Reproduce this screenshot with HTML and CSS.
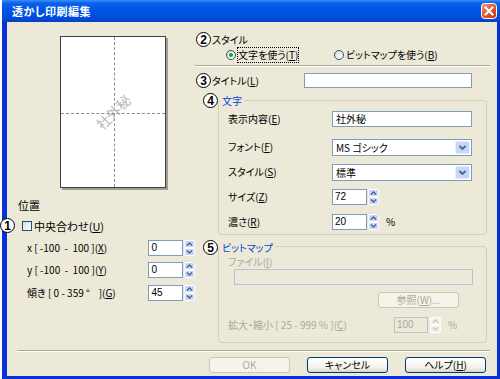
FILE: index.html
```html
<!DOCTYPE html>
<html lang="ja">
<head>
    <meta charset="UTF-8">
    <title>透かし印刷編集</title>
    <link rel="stylesheet" href="styles.css">
</head>
<body>
    <div class="window">
        <div class="titlebar">
            <span class="title">透かし印刷編集</span>
            <svg class="close-btn" width="16" height="16" viewBox="0 0 16 16">
                <defs>
                    <linearGradient id="closeGrad" x1="0" y1="0" x2="1" y2="1">
                        <stop offset="0" stop-color="#f09a7c"/>
                        <stop offset="0.5" stop-color="#e05a34"/>
                        <stop offset="1" stop-color="#c23a14"/>
                    </linearGradient>
                </defs>
                <rect x="0.5" y="0.5" width="15" height="15" rx="3" fill="url(#closeGrad)" stroke="#fff"/>
                <path d="M4.5 4.5 L11.5 11.5 M11.5 4.5 L4.5 11.5" stroke="#fff" stroke-width="2" stroke-linecap="square"/>
            </svg>
        </div>

        <div class="client">
            <div class="main">
                <!-- left: preview and position -->
                <div class="left-col">
                    <div class="preview">
                        <span class="watermark">社外秘</span>
                    </div>
                    <div class="pos-label">位置</div>
                    <div class="check-row">
                        <span class="num">1</span>
                        <span class="checkbox"></span>
                        <span class="check-text">中央合わせ(<u>U</u>)</span>
                    </div>
                    <div class="spin-row first">
                        <span class="spin-label">x [ -100&nbsp;&nbsp;-&nbsp;&nbsp;100 ](<u>X</u>)</span>
                        <span class="num-input">0</span>
                        <svg class="spinner" width="11" height="16" viewBox="0 0 11 16"><rect x="0.5" y="0.5" width="10" height="7" rx="1.5" fill="#c6d6fb" stroke="#fff"/><rect x="0.5" y="8.5" width="10" height="7" rx="1.5" fill="#c6d6fb" stroke="#fff"/><path d="M3 5.5 L5.5 3 L8 5.5 M3 10.5 L5.5 13 L8 10.5" fill="none" stroke="#4d6185" stroke-width="1.4"/></svg>
                    </div>
                    <div class="spin-row second">
                        <span class="spin-label">y [ -100&nbsp;&nbsp;-&nbsp;&nbsp;100 ](<u>Y</u>)</span>
                        <span class="num-input">0</span>
                        <svg class="spinner" width="11" height="16" viewBox="0 0 11 16"><rect x="0.5" y="0.5" width="10" height="7" rx="1.5" fill="#c6d6fb" stroke="#fff"/><rect x="0.5" y="8.5" width="10" height="7" rx="1.5" fill="#c6d6fb" stroke="#fff"/><path d="M3 5.5 L5.5 3 L8 5.5 M3 10.5 L5.5 13 L8 10.5" fill="none" stroke="#4d6185" stroke-width="1.4"/></svg>
                    </div>
                    <div class="spin-row third">
                        <span class="spin-label">傾き [ 0 - 359 °&nbsp;&nbsp;&nbsp;&nbsp;](<u>G</u>)</span>
                        <span class="num-input">45</span>
                        <svg class="spinner" width="11" height="16" viewBox="0 0 11 16"><rect x="0.5" y="0.5" width="10" height="7" rx="1.5" fill="#c6d6fb" stroke="#fff"/><rect x="0.5" y="8.5" width="10" height="7" rx="1.5" fill="#c6d6fb" stroke="#fff"/><path d="M3 5.5 L5.5 3 L8 5.5 M3 10.5 L5.5 13 L8 10.5" fill="none" stroke="#4d6185" stroke-width="1.4"/></svg>
                    </div>
                </div>

                <!-- right: style, title, text, bitmap -->
                <div class="right-col">
                    <div class="head-row style-head">
                        <span class="num">2</span>
                        <span class="head-label">スタイル</span>
                    </div>
                    <div class="radio-row">
                        <span class="radio-item first">
                            <span class="radio checked"></span>
                            <span class="radio-text focused">文字を使う(<u>T</u>)</span>
                        </span>
                        <span class="radio-item">
                            <span class="radio"></span>
                            <span class="radio-text">ビットマップを使う(<u>B</u>)</span>
                        </span>
                    </div>
                    <div class="sep"></div>
                    <div class="head-row title-head">
                        <span class="num">3</span>
                        <span class="head-label wide">タイトル(<u>L</u>)</span>
                        <span class="text-input title-input"></span>
                    </div>

                    <div class="group-head text-head">
                        <span class="num">4</span>
                        <span class="group-name">文字</span>
                    </div>
                    <div class="group-box text-box">
                        <div class="form-row">
                            <span class="form-label">表示内容(<u>E</u>)</span>
                            <span class="text-input wide-input">社外秘</span>
                        </div>
                        <div class="form-row gap-12">
                            <span class="form-label">フォント(<u>F</u>)</span>
                            <span class="select">MS ゴシック
                                <svg class="drop-btn" width="15" height="13" viewBox="0 0 15 13"><rect x="0.5" y="0.5" width="14" height="12" rx="1.5" fill="#c6d6fb" stroke="#e8eefc"/><path d="M4.5 5 L7.5 8 L10.5 5" fill="none" stroke="#4d6185" stroke-width="1.8"/></svg>
                            </span>
                        </div>
                        <div class="form-row gap-9">
                            <span class="form-label">スタイル(<u>S</u>)</span>
                            <span class="select">標準
                                <svg class="drop-btn" width="15" height="13" viewBox="0 0 15 13"><rect x="0.5" y="0.5" width="14" height="12" rx="1.5" fill="#c6d6fb" stroke="#e8eefc"/><path d="M4.5 5 L7.5 8 L10.5 5" fill="none" stroke="#4d6185" stroke-width="1.8"/></svg>
                            </span>
                        </div>
                        <div class="form-row gap-9">
                            <span class="form-label">サイズ(<u>Z</u>)</span>
                            <span class="num-input">72</span>
                            <svg class="spinner" width="11" height="16" viewBox="0 0 11 16"><rect x="0.5" y="0.5" width="10" height="7" rx="1.5" fill="#c6d6fb" stroke="#fff"/><rect x="0.5" y="8.5" width="10" height="7" rx="1.5" fill="#c6d6fb" stroke="#fff"/><path d="M3 5.5 L5.5 3 L8 5.5 M3 10.5 L5.5 13 L8 10.5" fill="none" stroke="#4d6185" stroke-width="1.4"/></svg>
                        </div>
                        <div class="form-row gap-9">
                            <span class="form-label">濃さ(<u>R</u>)</span>
                            <span class="num-input">20</span>
                            <svg class="spinner" width="11" height="16" viewBox="0 0 11 16"><rect x="0.5" y="0.5" width="10" height="7" rx="1.5" fill="#c6d6fb" stroke="#fff"/><rect x="0.5" y="8.5" width="10" height="7" rx="1.5" fill="#c6d6fb" stroke="#fff"/><path d="M3 5.5 L5.5 3 L8 5.5 M3 10.5 L5.5 13 L8 10.5" fill="none" stroke="#4d6185" stroke-width="1.4"/></svg>
                            <span class="unit">%</span>
                        </div>
                    </div>

                    <div class="group-head bitmap-head">
                        <span class="num">5</span>
                        <span class="group-name">ビットマップ</span>
                    </div>
                    <div class="group-box bitmap-box">
                        <div class="file-label">ファイル(<u>I</u>)</div>
                        <div class="text-input disabled file-input"></div>
                        <div class="btn disabled browse-btn">参照(<u>W</u>)...</div>
                        <div class="form-row scale-row">
                            <span class="form-label scale-label">拡大・縮小 [ 25 - 999 % ](<u>C</u>)</span>
                            <span class="num-input disabled">100</span>
                            <svg class="spinner" width="11" height="16" viewBox="0 0 11 16"><rect x="0.5" y="0.5" width="10" height="7" rx="1.5" fill="#f2f1ea" stroke="#fff"/><rect x="0.5" y="8.5" width="10" height="7" rx="1.5" fill="#f2f1ea" stroke="#fff"/><path d="M3 5.5 L5.5 3 L8 5.5 M3 10.5 L5.5 13 L8 10.5" fill="none" stroke="#c9c7ba" stroke-width="1.4"/></svg>
                            <span class="unit">%</span>
                        </div>
                    </div>
                </div>
            </div>

            <div class="footer-sep"></div>
            <div class="buttons">
                <div class="btn disabled">OK</div>
                <div class="btn">キャンセル</div>
                <div class="btn">ヘルプ(<u>H</u>)</div>
            </div>
        </div>
    </div>
</body>
</html>
```

FILE: styles.css
```css
* {
    box-sizing: border-box;
}

body {
    margin: 0;
    background: #fff;
    font-family: "Noto Sans CJK JP", sans-serif;
    font-size: 10px;
    line-height: 14px;
    color: #000;
    font-feature-settings: "palt";
}

u {
    text-decoration: underline;
}

.window {
    margin-left: 2px;
    width: 498px;
    height: 379px;
    background: #0831d9;
    display: flex;
    flex-direction: column;
}

.titlebar {
    height: 22px;
    display: flex;
    align-items: center;
    padding: 0 3px 0 10px;
    background: linear-gradient(#3d8ff8 0, #0a62ec 3px, #0155e6 45%, #0149da 85%, #0540c4 100%);
}

.title {
    color: #fff;
    font-weight: bold;
    font-size: 11px;
    letter-spacing: 0.5px;
}

.close-btn {
    margin-left: auto;
}

.client {
    margin: 0 3px 3px 5px;
    height: 354px;
    background: #ece9d8;
}

.main {
    display: flex;
    height: 321px;
}

/* left column */
.left-col {
    width: 188px;
}

.preview {
    position: relative;
    margin: 14px 0 0 53px;
    width: 106px;
    height: 152px;
    border: 1px solid #404040;
    background: #fff;
    box-shadow: 2px 2px 0 #a19f93;
}

.preview::before {
    content: "";
    position: absolute;
    left: 53px;
    top: 0;
    bottom: 0;
    border-left: 1px dashed #8c8c8c;
}

.preview::after {
    content: "";
    position: absolute;
    top: 76px;
    left: 0;
    right: 0;
    border-top: 1px dashed #8c8c8c;
}

.watermark {
    position: absolute;
    left: 50%;
    top: 50%;
    transform: translate(-50%, -50%) rotate(-45deg);
    color: #b8b8b8;
    font-size: 14px;
    white-space: nowrap;
}

.pos-label {
    margin: 10px 0 0 11px;
    font-size: 11px;
}

.num {
    width: 15px;
    height: 15px;
    flex: none;
    border: 1.5px solid #000;
    border-radius: 50%;
    background: #fff;
    display: flex;
    align-items: center;
    justify-content: center;
    font-family: "Liberation Sans", sans-serif;
    font-weight: bold;
    font-size: 12px;
    line-height: 1;
}

.check-row {
    display: flex;
    align-items: center;
    height: 15px;
    margin: 6px 0 0 -7px;
}

.checkbox {
    width: 10px;
    height: 10px;
    margin: 0 2px 0 7px;
    border: 1px solid #1c5180;
    background: linear-gradient(135deg, #dcdbd2, #fff);
}

.check-text {
    font-size: 11px;
}

.spin-row {
    display: flex;
    align-items: center;
    height: 16px;
    padding-left: 20px;
}

.spin-row.first {
    margin-top: 7px;
}

.spin-row.second {
    margin-top: 6px;
}

.spin-row.third {
    margin-top: 7px;
}

.spin-label {
    width: 123px;
    white-space: nowrap;
}

.num-input {
    width: 35px;
    height: 16px;
    padding-left: 2px;
    border: 1px solid #7f9db9;
    background: #fff;
    font-family: "Liberation Sans", sans-serif;
    font-size: 10px;
    line-height: 14px;
}

.num-input.disabled {
    width: 34px;
    border-color: #b5c4d3;
    background: #ece9d8;
    color: #aca899;
}

.spinner {
    margin-left: 1px;
    flex: none;
}

.unit {
    margin-left: 7px;
}

/* right column */
.right-col {
    flex: 1;
}

.head-row {
    display: flex;
    align-items: center;
    height: 15px;
    margin-left: 1px;
}

.style-head {
    margin-top: 10px;
}

.head-label {
    margin-left: 1px;
}

.head-label.wide {
    width: 92px;
}

.radio-row {
    display: flex;
    align-items: center;
    height: 14px;
    margin-top: 1px;
    padding-left: 31px;
}

.radio-item {
    display: flex;
    align-items: center;
}

.radio-item.first {
    width: 108px;
}

.radio {
    width: 10px;
    height: 10px;
    margin-right: 2px;
    border: 1px solid #1c5180;
    border-radius: 50%;
    background: linear-gradient(135deg, #dcdbd2, #fff);
    position: relative;
}

.radio.checked::after {
    content: "";
    position: absolute;
    left: 2px;
    top: 2px;
    width: 4px;
    height: 4px;
    border-radius: 50%;
    background: #21a121;
}

.radio-text.focused {
    outline: 1px dotted #000;
}

.sep {
    margin-top: 3px;
    width: 295px;
    border-top: 1px solid #aca899;
    border-bottom: 1px solid #fff;
}

.title-head {
    margin-top: 6px;
}

.text-input {
    height: 16px;
    padding-left: 3px;
    border: 1px solid #7f9db9;
    background: #fff;
    line-height: 14px;
}

.title-input {
    width: 168px;
    height: 15px;
}

.group-head {
    position: relative;
    z-index: 1;
    display: flex;
    align-items: center;
    height: 15px;
    margin-left: 8px;
}

.text-head {
    margin-top: 5px;
}

.bitmap-head {
    margin-top: 5px;
}

.group-name {
    margin-left: 2px;
    padding: 0 2px;
    background: #ece9d8;
    color: #0046d5;
}

.group-box {
    width: 269px;
    margin-left: 23px;
    border: 1px solid #d0d0bf;
    border-radius: 4px;
    padding-left: 9px;
}

.text-box {
    margin-top: -8px;
    height: 135px;
    padding-top: 10px;
}

.bitmap-box {
    margin-top: -9px;
    height: 97px;
    padding-top: 8px;
    color: #aca899;
}

.form-row {
    display: flex;
    align-items: center;
    height: 16px;
}

.form-row.gap-12 {
    margin-top: 12px;
}

.form-row.gap-9 {
    margin-top: 9px;
}

.form-label {
    width: 104px;
    white-space: nowrap;
}

.wide-input {
    width: 140px;
}

.select {
    position: relative;
    width: 140px;
    height: 17px;
    padding-left: 3px;
    border: 1px solid #7f9db9;
    background: #fff;
    line-height: 15px;
}

.drop-btn {
    position: absolute;
    right: 1px;
    top: 1px;
}

.file-label {
    height: 14px;
}

.file-input {
    width: 239px;
    margin-left: 6px;
    border-color: #b5c4d3;
    background: #ece9d8;
}

.browse-btn {
    width: 93px;
    height: 15px;
    margin: 7px 0 0 150px;
    line-height: 13px;
}

.scale-row {
    margin-top: 9px;
}

.scale-label {
    width: 166px;
}

.scale-row .spinner {
    margin-left: 2px;
}

/* footer */
.footer-sep {
    margin: 7px 0 0 10px;
    width: 473px;
    border-top: 1px solid #aca899;
    border-bottom: 1px solid #fff;
}

.buttons {
    display: flex;
    justify-content: flex-end;
    gap: 17px;
    margin: 5px 11px 0 0;
}

.btn {
    width: 81px;
    height: 16px;
    border: 1px solid #003c74;
    border-radius: 3px;
    background: linear-gradient(#fff, #f2f1ec 70%, #d8d4c8);
    text-align: center;
    line-height: 14px;
}

.btn.disabled {
    border-color: #c9c7ba;
    background: #f5f4ea;
    color: #aca899;
}
```
